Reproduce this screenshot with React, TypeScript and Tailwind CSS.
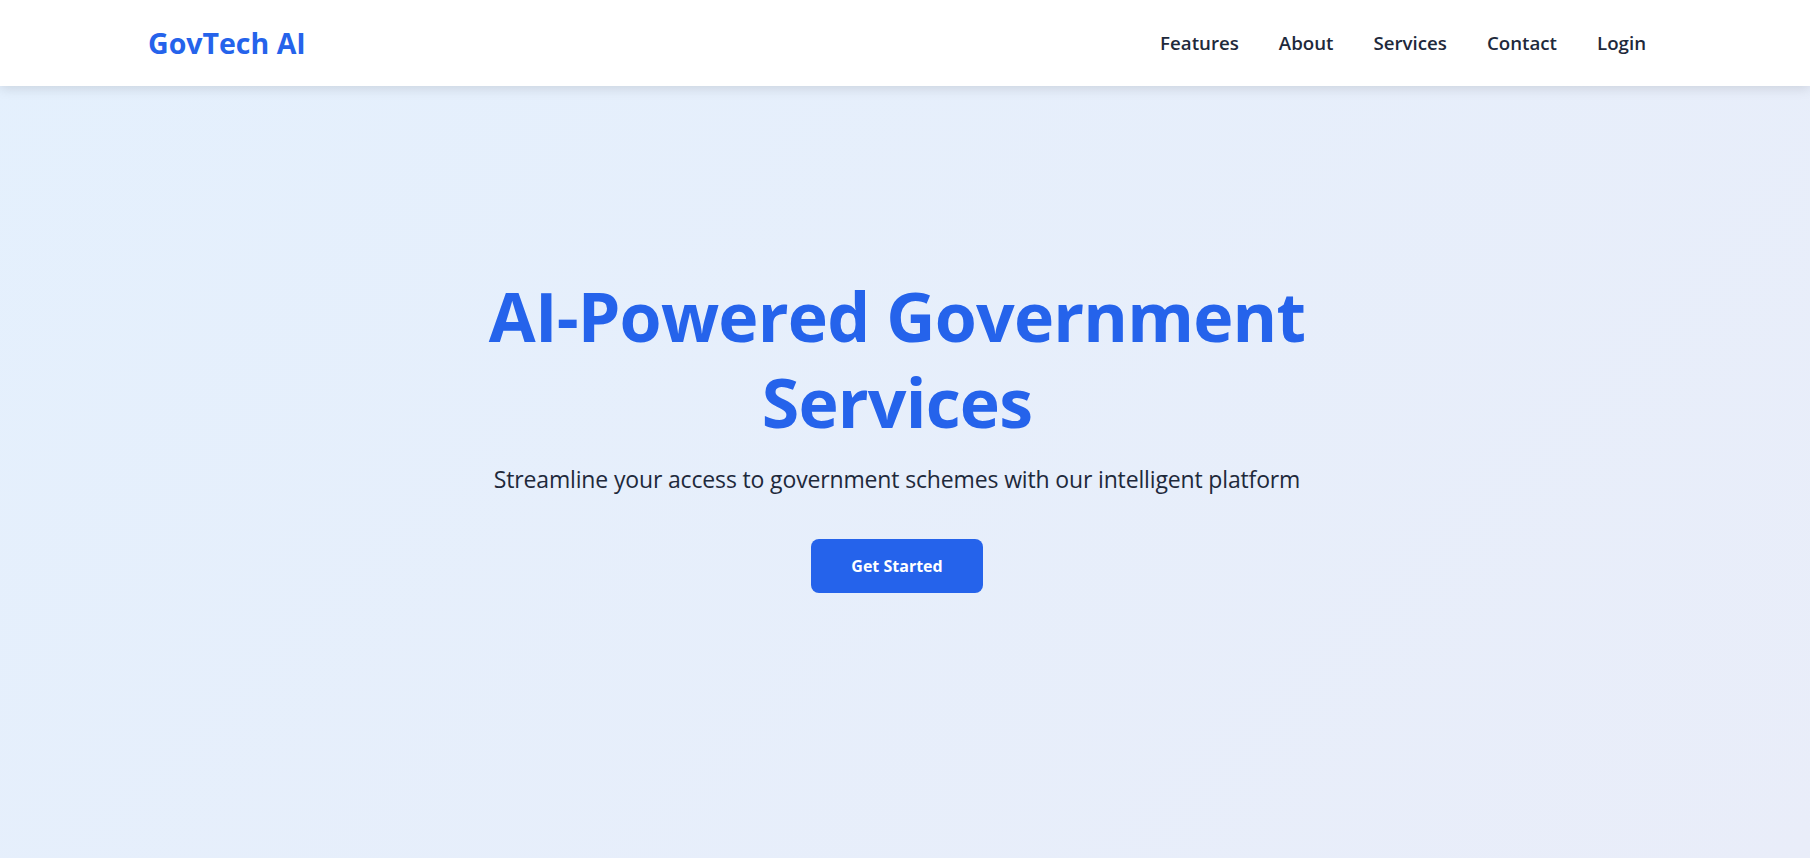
export default function App() {
  const links = ["Features", "About", "Services", "Contact", "Login"];

  return (
    <div
      className="min-h-screen bg-[linear-gradient(135deg,#e4f0fd,#e9edf9)]"
      style={{ fontFamily: '"Open Sans", "Noto Sans", sans-serif' }}
    >
      <nav className="h-[86px] bg-white shadow-[0_2px_12px_rgba(0,0,0,0.13)] flex items-center justify-between pl-[148px] pr-[164px] relative">
        <a href="#" className="text-[28.5px] font-bold text-[#2563eb] leading-none">
          GovTech AI
        </a>
        <ul className="flex items-center gap-10">
          {links.map((l) => (
            <li key={l}>
              <a href="#" className="text-[18.7px] font-semibold text-[#1e293b]">
                {l}
              </a>
            </li>
          ))}
        </ul>
      </nav>

      <section className="min-h-[80vh] pt-2 pr-4 flex flex-col items-center justify-center text-center">
        <h1 className="text-[68px] leading-[86px] tracking-[-0.8px] font-bold text-[#2563eb] max-w-[900px]">
          AI-Powered Government Services
        </h1>
        <p className="mt-[17px] text-[23px] leading-[1.5] tracking-[-0.15px] text-[#1e293b]">
          Streamline your access to government schemes with our intelligent platform
        </p>
        <button className="mt-[42px] px-10 py-4 bg-[#2563eb] text-white text-[16px] leading-[22px] font-bold rounded-lg">
          Get Started
        </button>
      </section>
    </div>
  );
}
